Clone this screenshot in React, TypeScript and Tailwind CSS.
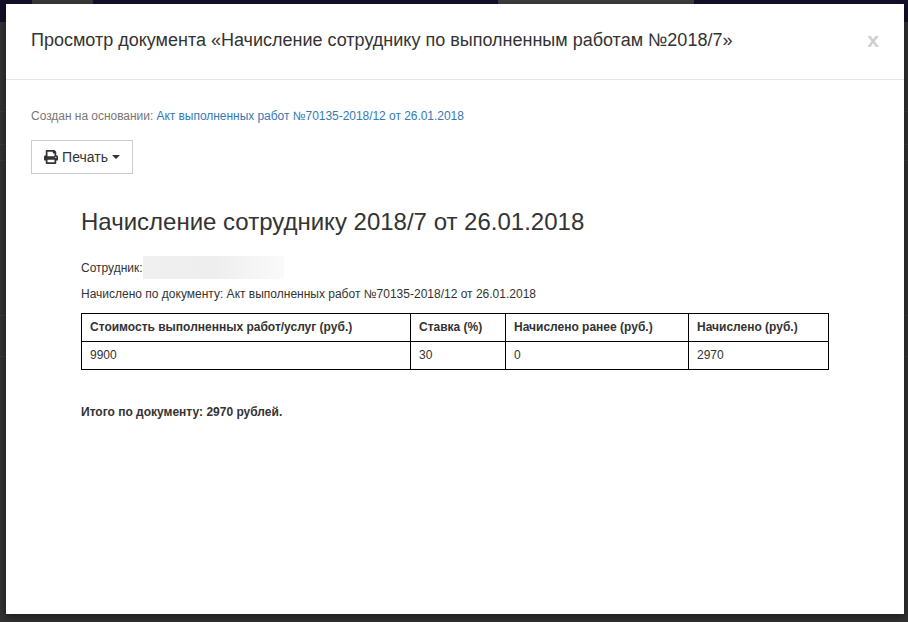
import { FaPrint } from "react-icons/fa";

const headers = [
  { label: "Стоимость выполненных работ/услуг (руб.)", value: "9900", width: "w-[329px]" },
  { label: "Ставка (%)", value: "30", width: "w-[95px]" },
  { label: "Начислено ранее (руб.)", value: "0", width: "w-[183px]" },
  { label: "Начислено (руб.)", value: "2970", width: "" },
];

export default function App() {
  return (
    <div className="relative h-[622px] w-[908px] overflow-hidden bg-[#333] font-['Liberation_Sans',Arial,sans-serif]">
      {/* страница за затемнением */}
      <div className="flex h-[22px] items-start bg-[#14102a]">
        <div className="ml-[32px] h-1 w-[61px] bg-[#3a3a3a]" />
        <div className="ml-[405px] h-1 w-[196px] bg-[#3f3f3f]" />
      </div>
      <div className="h-[90px] border-b border-[#3d3d3d]" />
      <div className="h-[33px] border-b border-[#3d3d3d]" />
      <div className="h-[16px] border-b border-[#3d3d3d]" />
      <div className="h-[155px] border-b border-[#3d3d3d]" />
      <div className="h-[41px] border-b border-[#3d3d3d]" />

      {/* модальное окно */}
      <div className="absolute left-[6px] top-1 h-[610px] w-[898px] bg-white shadow-[0_3px_9px_rgba(0,0,0,0.5)]">
        <div className="flex h-[76px] items-center justify-between border-b border-[#e5e5e5] pb-1 pl-[25px] pr-[25px]">
          <h4 className="text-lg leading-[20px] text-[#333]">
            Просмотр документа «Начисление сотруднику по выполненным работам №2018/7»
          </h4>
          <span className="text-[21px] font-bold leading-none text-[#cfcfcf]">x</span>
        </div>

        <div className="pl-[25px] pt-[29px]">
          <p className="text-xs leading-[14px] tracking-[-0.04px] text-[#777]">
            Создан на основании:{" "}
            <a className="text-[#337ab7]">Акт выполненных работ №70135-2018/12 от 26.01.2018</a>
          </p>

          <button className="mt-[17px] flex h-[34px] w-[102px] items-center justify-center gap-1 border border-[#ccc] text-sm text-[#333]">
            <FaPrint size={14} />
            Печать
            <span className="h-0 w-0 border-x-4 border-t-4 border-x-transparent border-t-[#333]" />
          </button>

          {/* документ */}
          <div className="ml-[50px] mt-[33px] w-[748px]">
            <h2 className="text-2xl leading-[30px] text-[#333]">
              Начисление сотруднику 2018/7 от 26.01.2018
            </h2>

            <div className="mt-[19px] flex items-center text-xs text-[#333]">
              Сотрудник:
              <div className="h-[23px] w-[141px] bg-gradient-to-r from-[#f0f0f0] via-[#eeeeee] to-[#fafafa]" />
            </div>
            <p className="mt-[8px] text-xs leading-[14px] text-[#333]">
              Начислено по документу: Акт выполненных работ №70135-2018/12 от 26.01.2018
            </p>

            <table className="mt-[12px] w-[748px] table-fixed border-collapse text-xs text-[#333]">
              <thead>
                <tr>
                  {headers.map((h) => (
                    <th
                      key={h.label}
                      className={`${h.width} h-[28px] border border-black px-2 pb-[2px] text-left font-bold`}
                    >
                      {h.label}
                    </th>
                  ))}
                </tr>
              </thead>
              <tbody>
                <tr>
                  {headers.map((h) => (
                    <td key={h.label} className="h-[28px] border border-black px-2 pb-[2px]">
                      {h.value}
                    </td>
                  ))}
                </tr>
              </tbody>
            </table>

            <p className="mt-[35px] text-xs font-bold leading-[14px] text-[#333]">
              Итого по документу: 2970 рублей.
            </p>
          </div>
        </div>
      </div>
    </div>
  );
}
